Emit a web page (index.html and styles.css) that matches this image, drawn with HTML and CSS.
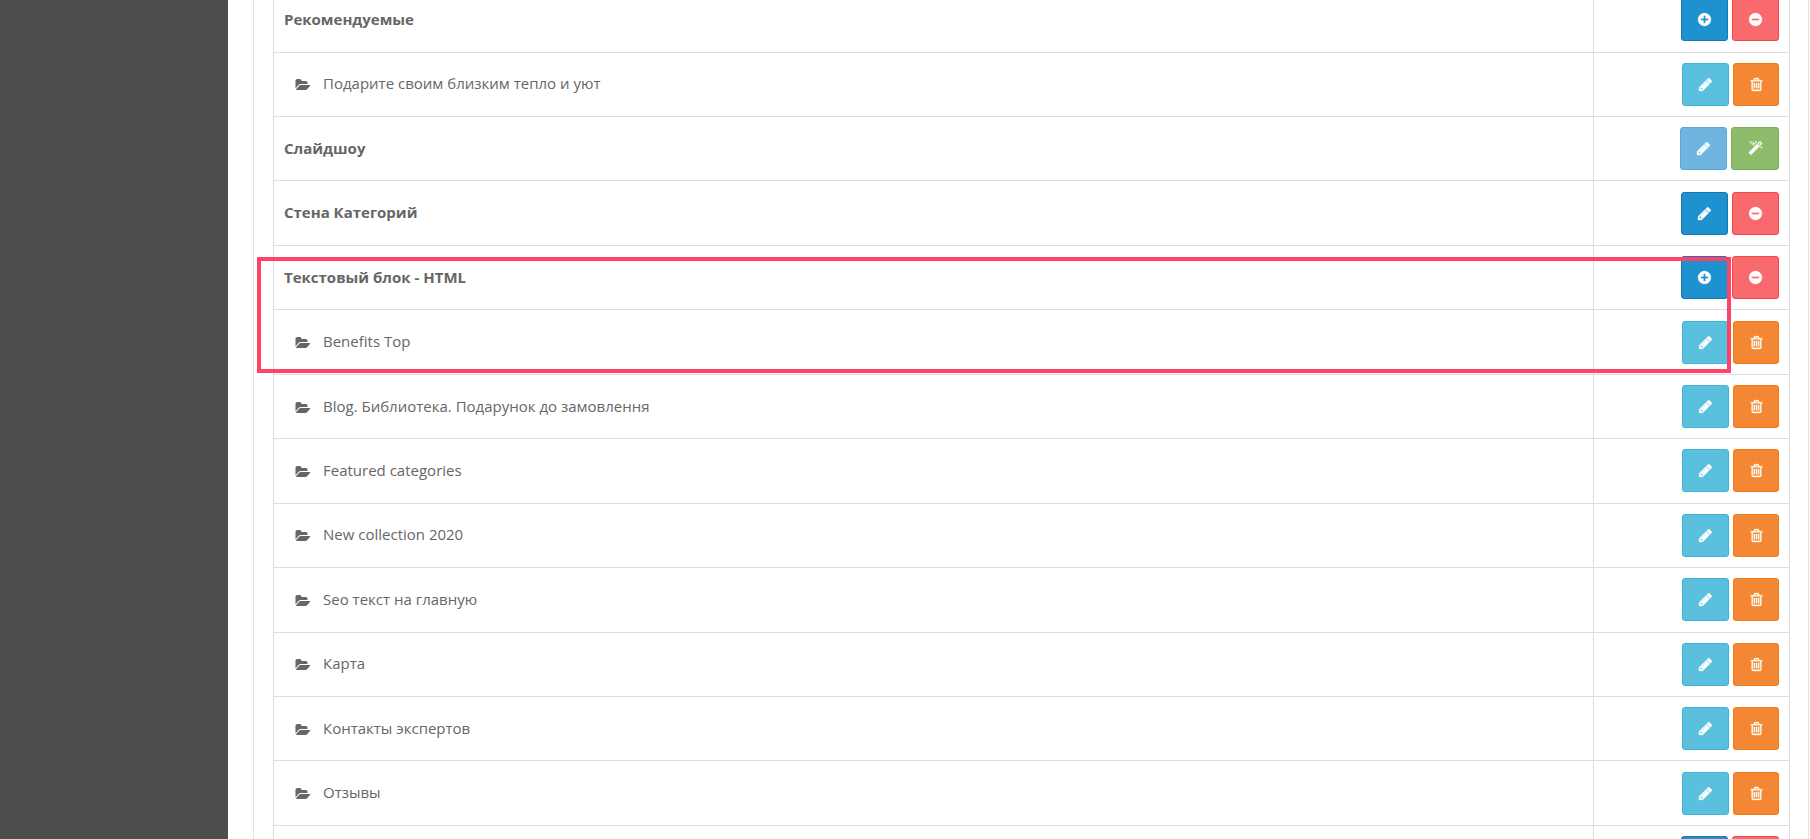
FILE: index.html
```html
<!DOCTYPE html>
<html lang="ru">
<head>
<meta charset="utf-8">
<title>Модули</title>
<link rel="stylesheet" href="styles.css">
</head>
<body>
<svg class="sprite" aria-hidden="true">
  <symbol id="i-plus" viewBox="0 0 1792 1792"><path d="M1344 960v-128q0-26-19-45t-45-19h-256v-256q0-26-19-45t-45-19h-128q-26 0-45 19t-19 45v256h-256q-26 0-45 19t-19 45v128q0 26 19 45t45 19h256v256q0 26 19 45t45 19h128q26 0 45-19t19-45v-256h256q26 0 45-19t19-45zm320-64q0 209-103 385.5t-279.5 279.5-385.5 103-385.5-103-279.5-279.5-103-385.5 103-385.5 279.5-279.5 385.5-103 385.5 103 279.5 279.5 103 385.5z"/></symbol>
  <symbol id="i-minus" viewBox="0 0 1792 1792"><path d="M1344 960v-128q0-26-19-45t-45-19h-768q-26 0-45 19t-19 45v128q0 26 19 45t45 19h768q26 0 45-19t19-45zm320-64q0 209-103 385.5t-279.5 279.5-385.5 103-385.5-103-279.5-279.5-103-385.5 103-385.5 279.5-279.5 385.5-103 385.5 103 279.5 279.5 103 385.5z"/></symbol>
  <symbol id="i-pencil" viewBox="0 0 1792 1792"><path d="M491 1536l91-91-235-235-91 91v107h128v128h107zm523-928q0-22-22-22-10 0-17 7l-542 542q-7 7-7 17 0 22 22 22 10 0 17-7l542-542q7-7 7-17zm-54-192l416 416-832 832h-416v-416zm683 96q0 53-37 90l-166 166-416-416 166-165q36-38 90-38 53 0 91 38l235 234q37 39 37 91z"/></symbol>
  <symbol id="i-trash" viewBox="0 0 1792 1792"><path d="M704 736v576q0 14-9 23t-23 9h-64q-14 0-23-9t-9-23v-576q0-14 9-23t23-9h64q14 0 23 9t9 23zm256 0v576q0 14-9 23t-23 9h-64q-14 0-23-9t-9-23v-576q0-14 9-23t23-9h64q14 0 23 9t9 23zm256 0v576q0 14-9 23t-23 9h-64q-14 0-23-9t-9-23v-576q0-14 9-23t23-9h64q14 0 23 9t9 23zm128 724v-948h-896v948q0 22 7 40.5t14.5 27 10.5 8.5h832q3 0 10.5-8.5t14.5-27 7-40.5zm-672-1076h448l-48-117q-7-9-17-11h-317q-10 2-17 11zm928 32v64q0 14-9 23t-23 9h-96v948q0 83-47 143.5t-113 60.5h-832q-66 0-113-58.5t-47-141.5v-952h-96q-14 0-23-9t-9-23v-64q0-14 9-23t23-9h309l70-167q15-37 54-63t79-26h320q40 0 79 26t54 63l70 167h309q14 0 23 9t9 23z"/></symbol>
  <symbol id="i-magic" viewBox="0 0 1792 1792"><path d="M1254 581l293-293-107-107-293 293zm447-293q0 27-18 45l-1286 1286q-18 18-45 18t-45-18l-198-198q-18-18-18-45t18-45l1286-1286q18-18 45-18t45 18l198 198q18 18 18 45zm-1351-190l98 30-98 30-30 98-30-98-98-30 98-30 30-98zm350 162l196 60-196 60-60 196-60-196-196-60 196-60 60-196zm930 478l98 30-98 30-30 98-30-98-98-30 98-30 30-98zm-640-640l98 30-98 30-30 98-30-98-98-30 98-30 30-98z"/></symbol>
  <symbol id="i-folder" viewBox="0 0 2048 1792"><path d="M1943 952q0 31-31 66l-336 396q-43 51-120.5 86.5t-143.5 35.5h-1088q-34 0-60.5-13t-26.5-43q0-31 31-66l336-396q43-51 120.5-86.5t143.5-35.5h1088q34 0 60.5 13t26.5 43zm-343-344v160h-832q-94 0-197 47.5t-164 119.5l-337 396-5 6q0-4-.5-12.5t-.5-12.5v-960q0-92 66-158t158-66h320q92 0 158 66t66 158v32h544q92 0 158 66t66 158z"/></symbol>
</svg>

<div class="layout">
  <aside class="sidebar"></aside>
  <main class="content">
    <section class="panel">
      <table class="modules">
        <tbody>
          <tr>
            <td class="name group">Рекомендуемые</td>
            <td class="actions"><div class="btns">
              <a class="btn btn-primary"><svg class="ico"><use href="#i-plus"/></svg></a>
              <a class="btn btn-danger"><svg class="ico"><use href="#i-minus"/></svg></a>
            </div></td>
          </tr>
          <tr>
            <td class="name child"><svg class="folder"><use href="#i-folder"/></svg>Подарите своим близким тепло и уют</td>
            <td class="actions"><div class="btns">
              <a class="btn btn-info"><svg class="ico"><use href="#i-pencil"/></svg></a>
              <a class="btn btn-warning"><svg class="ico"><use href="#i-trash"/></svg></a>
            </div></td>
          </tr>
          <tr>
            <td class="name group">Слайдшоу</td>
            <td class="actions"><div class="btns">
              <a class="btn btn-muted"><svg class="ico"><use href="#i-pencil"/></svg></a>
              <a class="btn btn-success"><svg class="ico"><use href="#i-magic"/></svg></a>
            </div></td>
          </tr>
          <tr>
            <td class="name group">Стена Категорий</td>
            <td class="actions"><div class="btns">
              <a class="btn btn-primary"><svg class="ico"><use href="#i-pencil"/></svg></a>
              <a class="btn btn-danger"><svg class="ico"><use href="#i-minus"/></svg></a>
            </div></td>
          </tr>
          <tr>
            <td class="name group">Текстовый блок - HTML</td>
            <td class="actions"><div class="btns">
              <a class="btn btn-primary"><svg class="ico"><use href="#i-plus"/></svg></a>
              <a class="btn btn-danger"><svg class="ico"><use href="#i-minus"/></svg></a>
            </div></td>
          </tr>
          <tr>
            <td class="name child"><svg class="folder"><use href="#i-folder"/></svg>Benefits Top</td>
            <td class="actions"><div class="btns">
              <a class="btn btn-info"><svg class="ico"><use href="#i-pencil"/></svg></a>
              <a class="btn btn-warning"><svg class="ico"><use href="#i-trash"/></svg></a>
            </div></td>
          </tr>
          <tr>
            <td class="name child"><svg class="folder"><use href="#i-folder"/></svg>Blog. Библиотека. Подарунок до замовлення</td>
            <td class="actions"><div class="btns">
              <a class="btn btn-info"><svg class="ico"><use href="#i-pencil"/></svg></a>
              <a class="btn btn-warning"><svg class="ico"><use href="#i-trash"/></svg></a>
            </div></td>
          </tr>
          <tr>
            <td class="name child"><svg class="folder"><use href="#i-folder"/></svg>Featured categories</td>
            <td class="actions"><div class="btns">
              <a class="btn btn-info"><svg class="ico"><use href="#i-pencil"/></svg></a>
              <a class="btn btn-warning"><svg class="ico"><use href="#i-trash"/></svg></a>
            </div></td>
          </tr>
          <tr>
            <td class="name child"><svg class="folder"><use href="#i-folder"/></svg>New collection 2020</td>
            <td class="actions"><div class="btns">
              <a class="btn btn-info"><svg class="ico"><use href="#i-pencil"/></svg></a>
              <a class="btn btn-warning"><svg class="ico"><use href="#i-trash"/></svg></a>
            </div></td>
          </tr>
          <tr>
            <td class="name child"><svg class="folder"><use href="#i-folder"/></svg>Seo текст на главную</td>
            <td class="actions"><div class="btns">
              <a class="btn btn-info"><svg class="ico"><use href="#i-pencil"/></svg></a>
              <a class="btn btn-warning"><svg class="ico"><use href="#i-trash"/></svg></a>
            </div></td>
          </tr>
          <tr>
            <td class="name child"><svg class="folder"><use href="#i-folder"/></svg>Карта</td>
            <td class="actions"><div class="btns">
              <a class="btn btn-info"><svg class="ico"><use href="#i-pencil"/></svg></a>
              <a class="btn btn-warning"><svg class="ico"><use href="#i-trash"/></svg></a>
            </div></td>
          </tr>
          <tr>
            <td class="name child"><svg class="folder"><use href="#i-folder"/></svg>Контакты экспертов</td>
            <td class="actions"><div class="btns">
              <a class="btn btn-info"><svg class="ico"><use href="#i-pencil"/></svg></a>
              <a class="btn btn-warning"><svg class="ico"><use href="#i-trash"/></svg></a>
            </div></td>
          </tr>
          <tr>
            <td class="name child"><svg class="folder"><use href="#i-folder"/></svg>Отзывы</td>
            <td class="actions"><div class="btns">
              <a class="btn btn-info"><svg class="ico"><use href="#i-pencil"/></svg></a>
              <a class="btn btn-warning"><svg class="ico"><use href="#i-trash"/></svg></a>
            </div></td>
          </tr>
          <tr>
            <td class="name group"></td>
            <td class="actions"><div class="btns">
              <a class="btn btn-primary"><svg class="ico"><use href="#i-plus"/></svg></a>
              <a class="btn btn-danger"><svg class="ico"><use href="#i-minus"/></svg></a>
            </div></td>
          </tr>
        </tbody>
      </table>
    </section>
  </main>
</div>
<div class="highlight"></div>
</body>
</html>
```

FILE: styles.css
```css
html, body {
  margin: 0;
  height: 839px;
  overflow: hidden;
  background: #fff;
}

body {
  font-family: "Open Sans", "Liberation Sans", sans-serif;
  font-size: 15px;
  color: #666;
}

.sprite {
  display: none;
}

.layout {
  display: flex;
  height: 839px;
  overflow: hidden;
}

.sidebar {
  flex: 0 0 228px;
  background: #4d4d4d;
}

.content {
  flex: 1;
  min-width: 0;
  padding: 0 1px 0 25px;
}

.panel {
  box-sizing: border-box;
  margin-top: -12.85px;
  padding: 0 18px 0 19px;
  border-left: 1px solid #e3e3e3;
  border-right: 1px solid #e3e3e3;
}

.modules {
  width: 100%;
  border-collapse: collapse;
  table-layout: fixed;
}

.modules td {
  box-sizing: border-box;
  height: 64.44px;
  padding: 10px;
  border: 1px solid #ddd;
  vertical-align: middle;
  line-height: 20px;
}

.modules .name {
  padding-top: 9px;
  padding-bottom: 11px;
}

.modules .actions {
  width: 196px;
}

.group {
  font-weight: 700;
}

.modules .child {
  padding-left: 21px;
}

.folder {
  width: 16px;
  height: 14px;
  margin-right: 12px;
  fill: #666;
  vertical-align: -3px;
}

.btns {
  display: flex;
  justify-content: flex-end;
  gap: 4px;
}

.btn {
  box-sizing: border-box;
  display: flex;
  align-items: center;
  justify-content: center;
  width: 47px;
  height: 43px;
  border: 1px solid transparent;
  border-radius: 3px;
}

.ico {
  width: 15px;
  height: 15px;
  fill: #fff;
  stroke: #fff;
  stroke-width: 40;
}

.btn-primary {
  background: #1e91cf;
  border-color: #1978ab;
}

.btn-danger {
  background: #f96a6e;
  border-color: #f24545;
}

.btn-info {
  background: #5bc0de;
  border-color: #3db5d8;
}

.btn-warning {
  width: 46px;
  background: #f38733;
  border-color: #f07a13;
}

.btn-muted {
  background: #6fb5df;
  border-color: #5ea7d3;
}

.btn-success {
  width: 48px;
  background: #8fbb6c;
  border-color: #7aae50;
}

.highlight {
  position: absolute;
  left: 257px;
  top: 257px;
  box-sizing: border-box;
  width: 1474px;
  height: 116px;
  border: 4px solid #fc4469;
}
```
